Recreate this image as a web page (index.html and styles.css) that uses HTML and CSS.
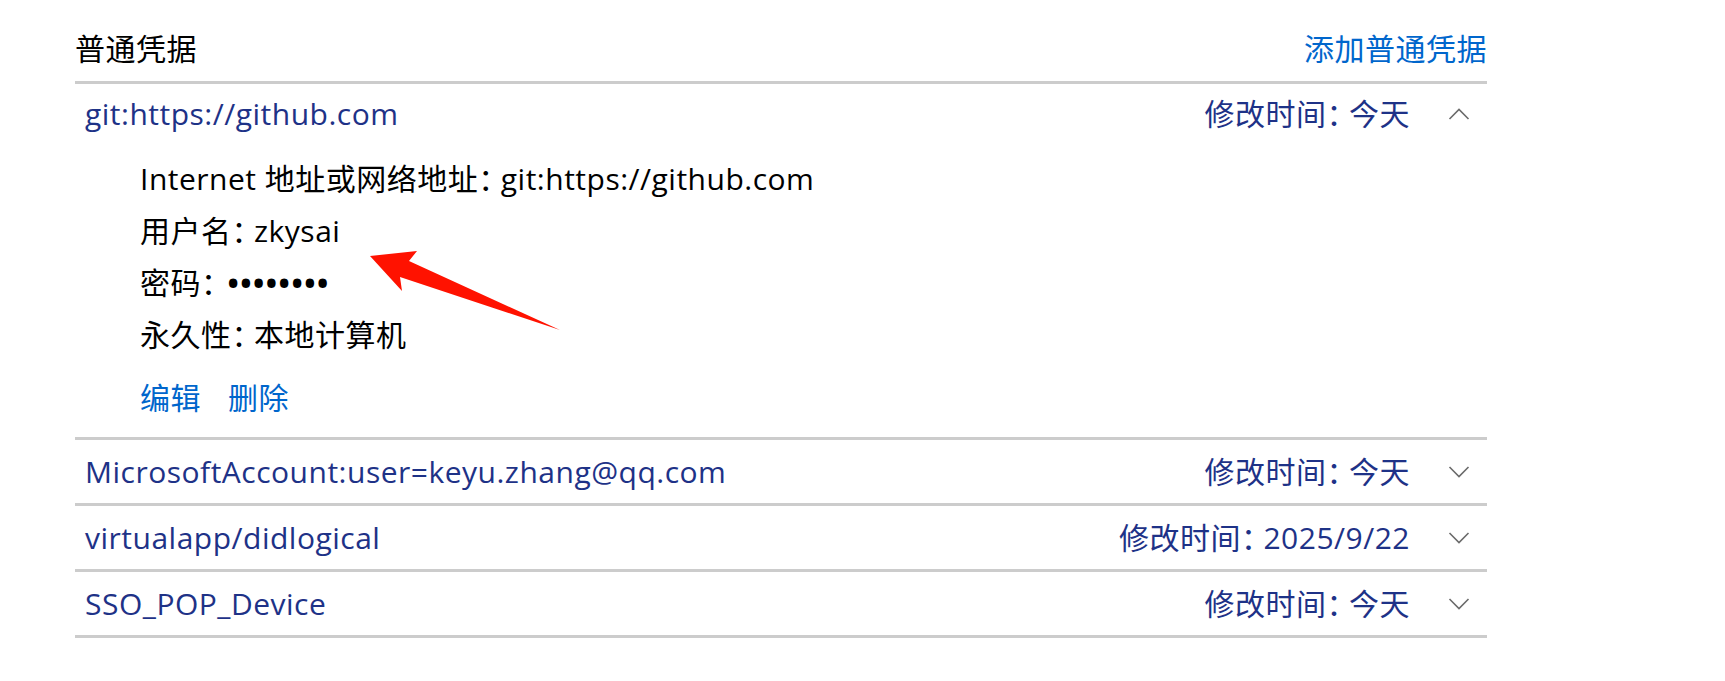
FILE: index.html
```html
<!DOCTYPE html>
<html lang="zh-CN">
<head>
<meta charset="utf-8">
<title>凭据管理器</title>
<link rel="stylesheet" href="styles.css">
</head>
<body>
<div class="panel">
  <div class="panel-header">
    <span class="panel-title">普通凭据</span>
    <a class="link add-link">添加普通凭据</a>
  </div>

  <div class="item expanded">
    <div class="item-head">
      <span class="item-name">git:https://github.com</span>
      <span class="item-date">修改时间<span class="colon">：</span>今天</span>
      <svg class="chev" width="22" height="12" viewBox="0 0 22 12"><polyline points="1.5,11 11,1.5 20.5,11" fill="none" stroke="#6b6b6b" stroke-width="1.6"/></svg>
    </div>
    <div class="item-body">
      <div class="detail">Internet 地址或网络地址<span class="colon">：</span>git:https://github.com</div>
      <div class="detail">用户名<span class="colon">：</span>zkysai</div>
      <div class="detail">密码<span class="colon">：</span><span class="dots">••••••••</span></div>
      <div class="detail">永久性<span class="colon">：</span>本地计算机</div>
      <div class="actions">
        <a class="link">编辑</a>
        <a class="link">删除</a>
      </div>
    </div>
  </div>

  <div class="item">
    <div class="item-head">
      <span class="item-name">MicrosoftAccount:user=keyu.zhang@qq.com</span>
      <span class="item-date">修改时间<span class="colon">：</span>今天</span>
      <svg class="chev" width="22" height="12" viewBox="0 0 22 12"><polyline points="1.5,1 11,10.5 20.5,1" fill="none" stroke="#6b6b6b" stroke-width="1.6"/></svg>
    </div>
  </div>

  <div class="item">
    <div class="item-head">
      <span class="item-name">virtualapp/didlogical</span>
      <span class="item-date">修改时间<span class="colon">：</span>2025/9/22</span>
      <svg class="chev" width="22" height="12" viewBox="0 0 22 12"><polyline points="1.5,1 11,10.5 20.5,1" fill="none" stroke="#6b6b6b" stroke-width="1.6"/></svg>
    </div>
  </div>

  <div class="item">
    <div class="item-head">
      <span class="item-name">SSO_POP_Device</span>
      <span class="item-date">修改时间<span class="colon">：</span>今天</span>
      <svg class="chev" width="22" height="12" viewBox="0 0 22 12"><polyline points="1.5,1 11,10.5 20.5,1" fill="none" stroke="#6b6b6b" stroke-width="1.6"/></svg>
    </div>
  </div>
</div>

<svg class="annotation" width="1725" height="681" viewBox="0 0 1725 681">
  <polygon points="370,256 417,251 409,261 560,330 400,277 402,291" fill="#ff1200"/>
</svg>
</body>
</html>
```
FILE: styles.css
```css
html, body {
  margin: 0;
  padding: 0;
  background: #ffffff;
}

body {
  font-family: "Open Sans", "Noto Sans CJK SC", sans-serif;
  font-size: 30px;
  letter-spacing: 0.5px;
  color: #000000;
  position: relative;
  width: 1725px;
  height: 681px;
  overflow: hidden;
}

.panel {
  margin-left: 75px;
  width: 1412px;
  padding-top: 29px;
}

.panel-header {
  display: flex;
  justify-content: space-between;
  align-items: center;
  line-height: 40px;
  padding-bottom: 12px;
  border-bottom: 3px solid #cccccc;
}

.panel-title {
  color: #000000;
}

.link {
  color: #0066cc;
  cursor: pointer;
}

.item {
  border-bottom: 3px solid #cccccc;
}

.item-head {
  display: flex;
  align-items: center;
  height: 63px;
  padding-left: 10px;
  padding-right: 17px;
  color: #1e3287;
  line-height: 40px;
}

.expanded .item-head {
  height: 60px;
  padding-bottom: 3px;
}

.item-name {
  flex: 1;
}

.item-date {
  margin-right: 38px;
  white-space: nowrap;
}

.colon {
  letter-spacing: -7.5px;
}

.chev {
  display: block;
  flex: none;
}

.item-body {
  padding: 6px 0 13px 65px;
}

.detail {
  line-height: 52px;
  height: 52px;
  white-space: nowrap;
}

.dots {
  font-weight: 700;
  letter-spacing: 1.5px;
  margin-left: 4px;
}

.actions {
  display: flex;
  gap: 27px;
  margin-top: 11px;
  line-height: 52px;
}

.annotation {
  position: absolute;
  left: 0;
  top: 0;
  pointer-events: none;
}
```
